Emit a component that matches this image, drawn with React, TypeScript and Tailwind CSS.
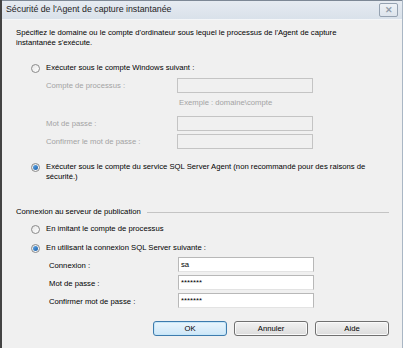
import React from "react";

const Radio = ({ checked }: { checked?: boolean }) => (
  <span className="relative flex h-[9px] w-[9px] shrink-0 items-center justify-center rounded-full border border-[#8a8a8a] bg-gradient-to-br from-[#e6e6e6] to-[#ffffff]">
    {checked && <span className="h-[5px] w-[5px] rounded-full bg-gradient-to-br from-[#5fa8e8] to-[#1a5fa8]" />}
  </span>
);

const Input = ({ disabled, value }: { disabled?: boolean; value?: string }) => (
  <div
    className={
      "ml-auto flex h-[15px] w-[136px] items-center border px-[2px] text-[7.7px] " +
      (disabled ? "border-[#c4c4c4] bg-[#f0f0f0]" : "border-[#b8b8b8] border-b-[#e3e3e3] bg-white")
    }
  >
    {value}
  </div>
);

const Btn = ({ label, def }: { label: string; def?: boolean }) => (
  <div
    className={
      "flex h-[15px] w-[74px] items-center justify-center rounded-[3px] border text-[7.7px] text-black " +
      (def
        ? "border-[#3d7bad] bg-gradient-to-b from-[#eaf6fd] to-[#cde6f7] shadow-[inset_0_0_0_1px_#c6e6f8]"
        : "border-[#707070] bg-gradient-to-b from-[#f2f2f2] to-[#dcdcdc] shadow-[inset_0_0_0_1px_#fafafa]")
    }
  >
    {label}
  </div>
);

export default function App() {
  return (
    <div
      className="flex h-[348px] w-[403px] flex-col overflow-hidden border-l-2 border-r border-l-[#444] border-r-[#a9b6c4] bg-[#f0f0f0] text-black"
      style={{ fontFamily: '"Liberation Sans", Arial, sans-serif' }}
    >
      {/* Title bar */}
      <div className="flex h-[20px] shrink-0 items-center border-t border-b border-t-[#7d8895] border-b-[#f4f6f8] bg-gradient-to-b from-[#e6ebf1] to-[#d9e1ea] pl-[4px] pr-[4px]">
        <span className="text-[8.8px] text-[#1e1e1e]">Sécurité de l'Agent de capture instantanée</span>
        <div className="ml-auto flex h-[14px] w-[19px] items-center justify-center rounded-[2px] border border-[#95a2b1] bg-gradient-to-b from-[#eef2f6] to-[#dde4ec] text-[9px] font-bold leading-none text-[#939dab]">
          ✕
        </div>
      </div>

      {/* Body */}
      <div className="flex flex-1 flex-col pl-[14px] pr-[12px] text-[7.7px] leading-[10px]">
        <div className="mt-[8px]">
          Spécifiez le domaine ou le compte d'ordinateur sous lequel le processus de l'Agent de capture
          <br />
          instantanée s'exécute.
        </div>

        <div className="mt-[15px] flex items-center gap-[6px] pl-[15px]">
          <Radio />
          <span>Exécuter sous le compte Windows suivant :</span>
        </div>

        <div className="mt-[5px] flex w-[297px] items-start pl-[30px] text-[#a3a3a3]">
          <span className="mt-[3px]">Compte de processus :</span>
          <Input disabled />
        </div>
        <div className="mt-[5px] pl-[163px] text-[#a3a3a3]">Exemple : domaine\compte</div>
        <div className="mt-[8px] flex w-[297px] items-center pl-[30px] text-[#a3a3a3]">
          <span>Mot de passe :</span>
          <Input disabled />
        </div>
        <div className="mt-[3px] flex w-[297px] items-center pl-[30px] text-[#a3a3a3]">
          <span>Confirmer le mot de passe :</span>
          <Input disabled />
        </div>

        <div className="mt-[14px] flex items-start gap-[6px] pl-[15px]">
          <Radio checked />
          <span className="-mt-[1px]">
            Exécuter sous le compte du service SQL Server Agent (non recommandé pour des raisons de
            <br />
            sécurité.)
          </span>
        </div>

        <div className="mt-[25px] flex items-center gap-[6px] pr-[1px]">
          <span>Connexion au serveur de publication</span>
          <div className="h-px flex-1 bg-[#c4c4c4]" />
        </div>

        <div className="mt-[7px] flex items-center gap-[6px] pl-[15px]">
          <Radio />
          <span>En imitant le compte de processus</span>
        </div>
        <div className="mt-[9px] flex items-center gap-[6px] pl-[15px]">
          <Radio checked />
          <span>En utilisant la connexion SQL Server suivante :</span>
        </div>

        <div className="mt-[4px] flex w-[298px] items-center pl-[33px]">
          <span className="mt-[3px]">Connexion :</span>
          <Input value="sa" />
        </div>
        <div className="mt-[3px] flex w-[298px] items-center pl-[33px]">
          <span className="mt-[2px]">Mot de passe :</span>
          <Input value="*******" />
        </div>
        <div className="mt-[3px] flex w-[298px] items-center pl-[33px]">
          <span className="mt-[2px]">Confirmer mot de passe :</span>
          <Input value="*******" />
        </div>

        <div className="mt-[13px] flex gap-[7px] pl-[137px]">
          <Btn label="OK" def />
          <Btn label="Annuler" />
          <Btn label="Aide" />
        </div>
      </div>
    </div>
  );
}
